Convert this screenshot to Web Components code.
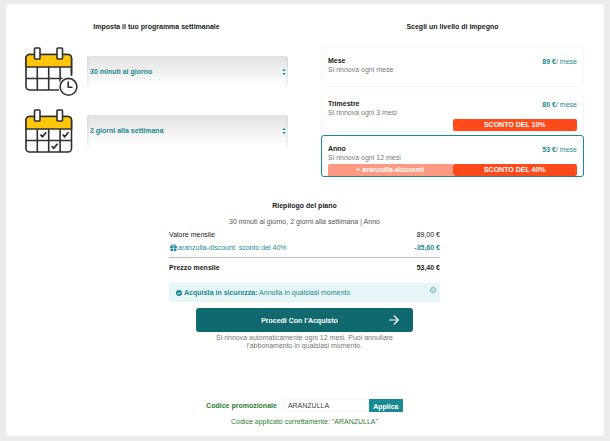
<!DOCTYPE html>
<html lang="it">
<head>
<meta charset="utf-8">
<meta name="viewport" content="width=device-width, initial-scale=1">
<title>Riepilogo del piano</title>
<style>
  html { background: #ececec; }
  body {
    margin: 4px 6px;
    font: 7px/9px "Liberation Sans", Arial, sans-serif;
    color: #222;
    --teal: #178a93;
    --teal-dark: #10696f;
    --muted: #777;
    --green: #2b8030;
    --orange: #ff4a1c;
  }
</style>
</head>
<body>
<checkout-page>
  <schedule-panel slot="left">
    <schedule-field label="Minuti al giorno" options="30 minuti al giorno|60 minuti al giorno"><calendar-icon kind="clock"></calendar-icon></schedule-field>
    <schedule-field label="Giorni alla settimana" options="2 giorni alla settimana|3 giorni alla settimana"><calendar-icon kind="checks"></calendar-icon></schedule-field>
  </schedule-panel>
  <plan-picker slot="right">
    <plan-card name="Mese" note="Si rinnova ogni mese" price="89 €"></plan-card>
    <plan-card name="Trimestre" note="Si rinnova ogni 3 mesi" price="80 €" badge="SCONTO DEL 10%"></plan-card>
    <plan-card name="Anno" note="Si rinnova ogni 12 mesi" price="53 €" badge="SCONTO DEL 40%" extra="+ aranzulla-discount" checked></plan-card>
  </plan-picker>
  <plan-summary></plan-summary>
  <promo-form></promo-form>
</checkout-page>

<script>
const define = (name, html, setup) => {
  customElements.define(name, class extends HTMLElement {
    connectedCallback() {
      if (this.shadowRoot) return;
      const t = document.createElement('template');
      t.innerHTML = typeof html === 'function' ? html(this) : html;
      this.attachShadow({ mode: 'open' }).append(t.content);
      if (setup) setup(this, this.shadowRoot);
    }
  });
};
const attr = (el, n) => el.getAttribute(n) || '';

define('checkout-page', `
  <style>
    :host { display: flex; flex-direction: column; background: #fff; border-radius: 4px; padding: 18px 20px 10px 19px; }
    .columns { display: grid; grid-template-columns: 1fr 1fr; gap: 33px; }
  </style>
  <main>
    <div class="columns"><slot name="left"></slot><slot name="right"></slot></div>
    <slot></slot>
  </main>`);

define('schedule-panel', `
  <style>
    :host { display: block; }
    h2 { font-size: 7px; margin: 0 0 16px; text-align: center; }
    .fields { display: flex; flex-direction: column; gap: 10px; }
  </style>
  <h2>Imposta il tuo programma settimanale</h2>
  <div class="fields"><slot></slot></div>`);

define('schedule-field', el => `
  <style>
    :host { display: flex; align-items: center; gap: 8px; height: 49px; }
    .box { flex: 1; display: grid; align-items: center; }
    .box > * { grid-area: 1 / 1; }
    select {
      appearance: none; width: 100%; height: 32px; margin: 0; padding: 0 12px 0 3px; border: 0; border-radius: 3px;
      background: linear-gradient(to right, #0001, #0000 3px calc(100% - 3px), #0001), linear-gradient(#e3e3e3, #ececec 35%, #f8f8f8 70%, #fff);
      font: bold 7px/9px "Liberation Sans", Arial, sans-serif; color: var(--teal);
    }
    svg { justify-self: end; margin-right: 2px; pointer-events: none; }
  </style>
  <slot></slot>
  <div class="box">
    <select aria-label="${attr(el, 'label')}">${attr(el, 'options').split('|').map(o => `<option>${o}</option>`).join('')}</select>
    <svg width="4" height="8" viewBox="0 0 4 8" fill="#178a93" aria-hidden="true"><path d="M.4 3 2 .8 3.600 3zM.4 5 2 7.200 3.600 5z"/></svg>
  </div>`);

define('calendar-icon', el => {
  const clock = attr(el, 'kind') === 'clock';
  const h = clock ? 49 : 44;
  return `
  <style>:host { display: block; width: 54px; flex: none; } svg { display: block; }</style>
  <svg width="54" height="${h}" viewBox="0 0 54 ${h}" fill="none" stroke="#303030" stroke-width="1.6" stroke-linejoin="round" aria-hidden="true">
    <rect x="1" y="7.500" width="45.500" height="35.500" rx="3.500" fill="#fff"/>
    <path d="M1 20V11A3.500 3.500 0 0 1 4.500 7.500H43A3.500 3.500 0 0 1 46.500 11V20Z" fill="#ffc60a"/>
    <path d="M1 31.500H46.500M12.300 20V43M23.700 20V43M35.100 20V43"/>
    <rect x="9.500" y="1" width="5.500" height="11" rx=".8" fill="#fff"/>
    <rect x="32" y="1" width="5.500" height="11" rx=".8" fill="#fff"/>
    ${clock
      ? `<circle cx="43.500" cy="39.800" r="10.200" fill="#fff" stroke="none"/><path d="M37 30.500H48V27H37z" fill="#fff" stroke="none"/><path d="M46.500 20V29"/><circle cx="43.500" cy="39.800" r="8.400" fill="#fff"/><path d="M43.200 34.500V40.300H47.500"/>`
      : `<path d="M15.500 25.500 17.500 27.800 21.200 23.300M37.700 25.500 39.700 27.800 43.400 23.300M26.800 37 28.800 39.300 32.500 34.800" stroke-width="1.800"/>`}
  </svg>`;
});

define('plan-picker', `
  <style>
    :host { display: block; }
    h2 { font-size: 7px; margin: 0 0 16px; text-align: center; }
    .list { display: flex; flex-direction: column; gap: 3px; }
  </style>
  <h2>Scegli un livello di impegno</h2>
  <div class="list"><slot></slot></div>`,
  host => host.addEventListener('plan-change', e => {
    for (const c of host.querySelectorAll('plan-card'))
      if (c !== e.target) c.shadowRoot.querySelector('input').checked = false;
  }));

define('plan-card', el => `
  <style>
    :host { display: block; }
    label { position: relative; display: block; border: 1px solid #f6f6f6; border-radius: 3px; padding: 8px 6px 0; min-height: 30px; }
    label:has(input:checked) { border-color: var(--teal); }
    input { position: absolute; opacity: 0; margin: 0; }
    .top { display: flex; justify-content: space-between; }
    .top strong { display: block; }
    .note { color: var(--muted); }
    .price { color: var(--teal); padding-top: 1px; }
    .tags { display: grid; grid-template-columns: 1fr 1fr; margin-top: 2px; color: #fff; font-weight: bold; text-align: center; line-height: 12px; }
    .badge { grid-column: 2; background: var(--orange); border-radius: 2px; }
    .extra { grid-row: 1; background: #ff9a82; border-radius: 2px 0 0 0; }
  </style>
  <label>
    <input type="radio" ${el.hasAttribute('checked') ? 'checked' : ''}>
    <div class="top">
      <div><strong>${attr(el, 'name')}</strong><span class="note">${attr(el, 'note')}</span></div>
      <div class="price"><b>${attr(el, 'price')}</b>/ mese</div>
    </div>
    ${attr(el, 'badge') ? `<div class="tags">${attr(el, 'extra') ? `<span class="extra">${attr(el, 'extra')}</span>` : ''}<span class="badge">${attr(el, 'badge')}</span></div>` : ''}
  </label>`,
  (host, root) => root.querySelector('input').addEventListener('change', () =>
    host.dispatchEvent(new CustomEvent('plan-change', { bubbles: true }))));

define('plan-summary', `
  <style>
    :host { display: block; max-width: 271px; margin: 24px auto 0; }
    h2 { font-size: 7px; margin: 0 0 7px; text-align: center; }
    p { margin: 0; text-align: center; color: #555; }
    table { width: 100%; border-collapse: collapse; margin-top: 4px; }
    th, td { padding: 0 0 4px; font-weight: normal; text-align: left; }
    td { text-align: right; }
    .discount { color: var(--teal); }
    .discount td { font-weight: bold; }
    .discount > * { padding-bottom: 5px; }
    .discount th > span { display: flex; align-items: center; gap: 1px; padding-left: 1px; }
    .total > * { border-top: 1px solid #bbb; font-weight: bold; padding: 5px 0 0; }
    .safe { display: flex; align-items: center; gap: 2px; height: 19px; box-sizing: border-box; margin-top: 11px; padding: 0 4px 0 7px; border-radius: 2px; background: #e6f5f5; color: var(--teal); }
    .safe .info { margin: 0 0 6px auto; }
    button {
      display: grid; grid-template-columns: 1fr auto; align-items: center; box-sizing: border-box; width: 80%; height: 24px; margin: 6px auto 2px; padding: 0 14px;
      border: 0; border-radius: 3px; background: var(--teal-dark); color: #fff; font: bold 7px/9px "Liberation Sans", Arial, sans-serif;
    }
    .renew { color: var(--muted); max-width: 200px; margin: 0 auto; line-height: 8px; }
    svg { flex: none; display: block; }
  </style>
  <section>
    <h2>Riepilogo del piano</h2>
    <p>30 minuti al giorno, 2 giorni alla settimana | Anno</p>
    <table>
      <tr><th scope="row">Valore mensile</th><td>89,00 €</td></tr>
      <tr class="discount"><th scope="row"><span>
        <svg width="7" height="7" viewBox="0 0 7 7" aria-hidden="true"><path d="M0 2.200H3.100V4H0zM3.900 2.200H7V4H3.900zM.5 4.400H3.100V7H.5zM3.900 4.400H6.500V7H3.900z" fill="#178a93"/><path d="M3.500 2.200C2.700.3 1.200.2 1.300 1.300 1.400 2 2.300 2.200 3.500 2.200 4.700 2.200 5.600 2 5.700 1.300 5.800.2 4.300.3 3.500 2.200" fill="none" stroke="#178a93" stroke-width=".8"/></svg>
        aranzulla-discount: sconto del 40%</span></th><td>-35,60 €</td></tr>
      <tr class="total"><th scope="row">Prezzo mensile</th><td>53,40 €</td></tr>
    </table>
    <div class="safe">
      <svg width="6" height="6" viewBox="0 0 6 6" aria-hidden="true"><circle cx="3" cy="3" r="3" fill="#178a93"/><path d="M1.500 3.100 2.600 4.200 4.500 2" fill="none" stroke="#fff" stroke-width=".9"/></svg>
      <span><b>Acquista in sicurezza:</b> Annulla in qualsiasi momento</span>
      <svg class="info" width="6" height="6" viewBox="0 0 6 6" fill="none" stroke="#178a93" stroke-width=".6" aria-hidden="true"><circle cx="3" cy="3" r="2.500"/><path d="M3 1.400V2M3 2.600V4.500"/></svg>
    </div>
    <button type="button"><span>Procedi Con l'Acquisto</span>
      <svg width="10" height="10" viewBox="0 0 10 10" fill="none" stroke="#fff" stroke-width="1.200" stroke-linecap="round" stroke-linejoin="round" aria-hidden="true"><path d="M.6 5H9.300M5.300 1 9.300 5 5.300 9"/></svg>
    </button>
    <p class="renew">Si rinnova automaticamente ogni 12 mesi. Puoi annullare l'abbonamento in qualsiasi momento.</p>
  </section>`);

define('promo-form', `
  <style>
    :host { display: block; margin-top: 49px; text-align: center; color: var(--green); }
    form { display: flex; justify-content: center; align-items: stretch; height: 13px; }
    label { font-weight: bold; line-height: 13px; margin-right: 6px; }
    input, button { box-sizing: border-box; margin: 0; font: 7px/9px "Liberation Sans", Arial, sans-serif; border-radius: 0; }
    input { width: 86px; border: 1px solid #f4f4f4; border-right: 0; padding: 0 4px; color: #444; background: #fff; }
    button { border: 0; padding: 2px 4px 0; width: 34px; background: #178a93; color: #fff; font-weight: bold; }
    output { display: block; margin-top: 5px; }
  </style>
  <form>
    <label for="code">Codice promozionale</label>
    <input id="code" type="text" value="ARANZULLA">
    <button type="button">Applica</button>
  </form>
  <output for="code">Codice applicato correttamente: "ARANZULLA"</output>`);
</script>
</body>
</html>
